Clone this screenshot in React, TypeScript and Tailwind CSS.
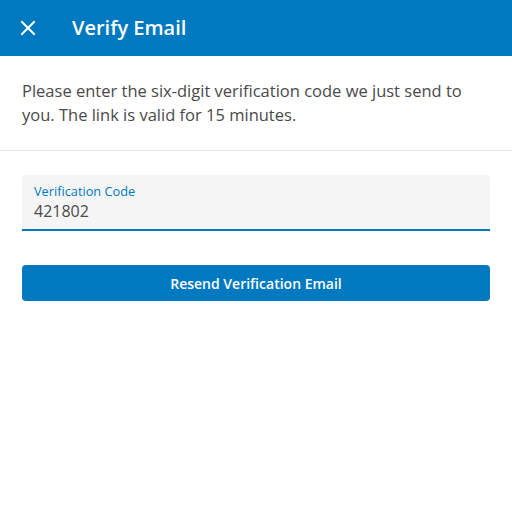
import React, { useState } from 'react';

export default function App() {
  const [code, setCode] = useState('421802');

  return (
    <div className="min-h-[512px] bg-white" style={{ fontFamily: '"Open Sans", sans-serif' }}>
      <header className="h-14 bg-[#0079c1] flex items-center text-white">
        <button className="w-14 h-14 flex items-center justify-center">
          <svg width="16" height="16" viewBox="0 0 16 16" fill="none" stroke="white" strokeWidth="2" strokeLinecap="square">
            <path d="M2 2L14 14M14 2L2 14" />
          </svg>
        </button>
        <h1 className="ml-4 text-[20px] font-semibold">Verify Email</h1>
      </header>

      <div className="px-[22px] pt-[23px] pb-[23px] border-b border-[#e6e6e6]">
        <p className="text-[16.5px] leading-6 text-[#4a4a4a]">
          Please enter the six-digit verification code we just send to you. The link is valid for 15 minutes.
        </p>
      </div>

      <div className="px-[22px] pt-6">
        <label className="block bg-[#f5f5f5] rounded-t border-b-2 border-[#0079c1] px-3 pt-[8px] pb-[6px]">
          <span className="block text-[12.75px] leading-4 text-[#0079c1]">Verification Code</span>
          <input
            value={code}
            onChange={(e) => setCode(e.target.value)}
            className="block w-full bg-transparent outline-none text-[16px] leading-6 text-[#4a4a4a]"
          />
        </label>

        <button className="mt-[34px] w-full h-9 rounded-sm bg-[#0079c1] text-white text-[14px] font-semibold">
          Resend Verification Email
        </button>
      </div>
    </div>
  );
}
